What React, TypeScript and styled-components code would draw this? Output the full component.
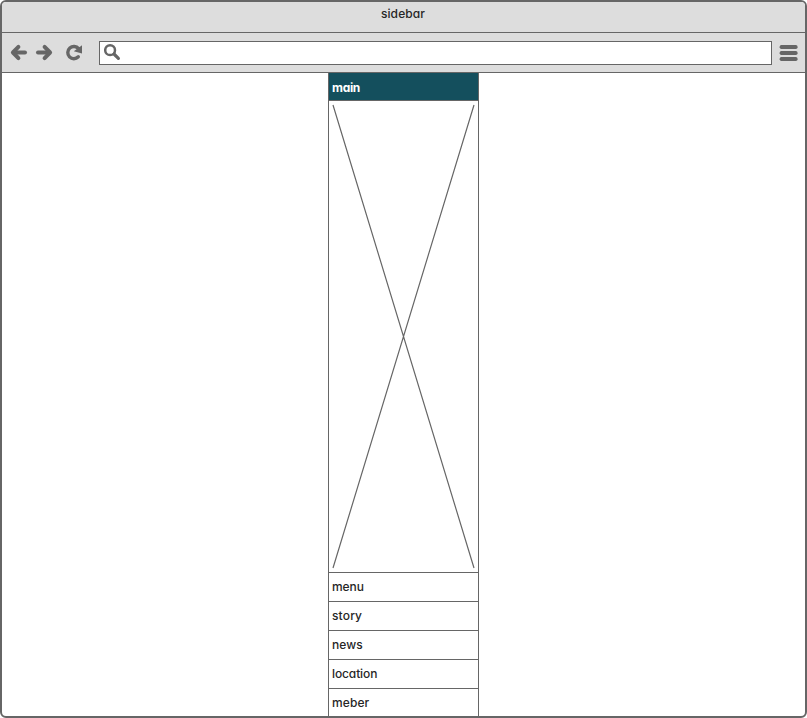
import React from 'react';
import styled, { createGlobalStyle } from 'styled-components';

const GlobalStyle = createGlobalStyle`
  * { box-sizing: border-box; }
  body { margin: 0; background: #fff; }
`;

const line = '#666';

const Window = styled.div`
  width: 807px;
  height: 718px;
  display: flex;
  flex-direction: column;
  border: 2px solid ${line};
  border-radius: 6px;
  overflow: hidden;
  background: #fff;
  color: #262626;
  font: 500 12px/16px Inter, 'Liberation Sans', sans-serif;
  font-feature-settings: 'cv11' 1;
`;

const TitleBar = styled.header`
  height: 31px;
  flex: none;
  padding: 4px 1px 0 0;
  text-align: center;
  letter-spacing: 0.1px;
  background: #ddd;
  border-bottom: 1px solid ${line};
`;

const Toolbar = styled.div`
  height: 40px;
  flex: none;
  display: flex;
  align-items: flex-start;
  padding: 8px 7px 0 8px;
  background: #ddd;
  border-bottom: 1px solid ${line};
`;

const ToolIcon = styled.svg<{ $gap: number }>`
  flex: none;
  width: 18px;
  height: 18px;
  margin: 3px ${(p) => p.$gap}px 0 0;
  fill: none;
  stroke: ${line};
`;

const AddressBar = styled.div`
  width: 673px;
  height: 24px;
  padding-left: 4px;
  background: #fff;
  border: 1px solid ${line};
`;

const SearchIcon = styled.svg`
  display: block;
  width: 18px;
  height: 18px;
  margin-top: 2px;
  fill: none;
  stroke: ${line};
`;

const MenuIcon = styled.svg`
  width: 19px;
  height: 18px;
  margin: 3px 0 0 7px;
  fill: ${line};
`;

const Page = styled.main`
  flex: 1;
  display: flex;
  justify-content: center;
`;

const Sidebar = styled.nav`
  width: 151px;
  height: 645px;
  border: 1px solid ${line};
  border-top: 0;
`;

const Item = styled.div<{ $active?: boolean; $spacing: number }>`
  height: ${(p) => (p.$active ? 28 : 29)}px;
  padding: ${(p) => (p.$active ? 7 : 6)}px 3px 0;
  border-top: ${(p) => (p.$active ? 0 : 1)}px solid ${line};
  border-bottom: ${(p) => (p.$active ? 1 : 0)}px solid ${line};
  background: ${(p) => (p.$active ? '#144f5d' : '#fff')};
  color: ${(p) => (p.$active ? '#fff' : '#262626')};
  font-weight: ${(p) => (p.$active ? 700 : 500)};
  letter-spacing: ${(p) => p.$spacing}px;
`;

const Placeholder = styled.svg`
  display: block;
  width: 149px;
  height: 471px;
  stroke: ${line};
  stroke-width: 1.2;
`;

const items = [
  { label: 'menu', spacing: -0.1 },
  { label: 'story', spacing: 0.15 },
  { label: 'news', spacing: 0.1 },
  { label: 'location', spacing: -0.12 },
  { label: 'meber', spacing: 0.1 },
];

export default function App() {
  return (
    <>
      <GlobalStyle />
      <Window>
        <TitleBar>sidebar</TitleBar>
        <Toolbar>
          <ToolIcon $gap={7} viewBox="0 0 18 18" strokeWidth="4">
            <path d="M4 8.5H15" strokeLinecap="round" />
            <path d="M8.4 2.9L2.9 8.5L8.4 14.1" strokeLinecap="round" strokeLinejoin="round" />
          </ToolIcon>
          <ToolIcon $gap={12} viewBox="0 0 18 18" strokeWidth="4">
            <path d="M3 8.5H14" strokeLinecap="round" />
            <path d="M9.6 2.9L15.1 8.5L9.6 14.1" strokeLinecap="round" strokeLinejoin="round" />
          </ToolIcon>
          <ToolIcon $gap={16} viewBox="0 0 18 18" strokeWidth="3.4">
            <path d="M13.3 12.8A6.1 6.1 0 1 1 13.6 4.7" strokeLinecap="round" />
            <path d="M17 1.3V9.6L8.8 7.2Z" fill={line} stroke="none" />
          </ToolIcon>
          <AddressBar>
            <SearchIcon viewBox="0 0 18 18">
              <circle cx="6.1" cy="6.2" r="4.9" strokeWidth="2.5" />
              <path d="M10 10L14.4 14.3" strokeWidth="3.2" strokeLinecap="round" />
            </SearchIcon>
          </AddressBar>
          <MenuIcon viewBox="0 0 19 18">
            <rect x="0.6" y="1" width="18" height="4" rx="1.8" />
            <rect x="0.6" y="7" width="18" height="4" rx="1.8" />
            <rect x="0.6" y="13" width="18" height="4" rx="1.8" />
          </MenuIcon>
        </Toolbar>
        <Page>
          <Sidebar>
            <Item $active $spacing={-0.3}>main</Item>
            <Placeholder viewBox="0 0 149 471">
              <path d="M4 4L145 467M145 4L4 467" />
            </Placeholder>
            {items.map((item) => (
              <Item key={item.label} $spacing={item.spacing}>{item.label}</Item>
            ))}
          </Sidebar>
        </Page>
      </Window>
    </>
  );
}
